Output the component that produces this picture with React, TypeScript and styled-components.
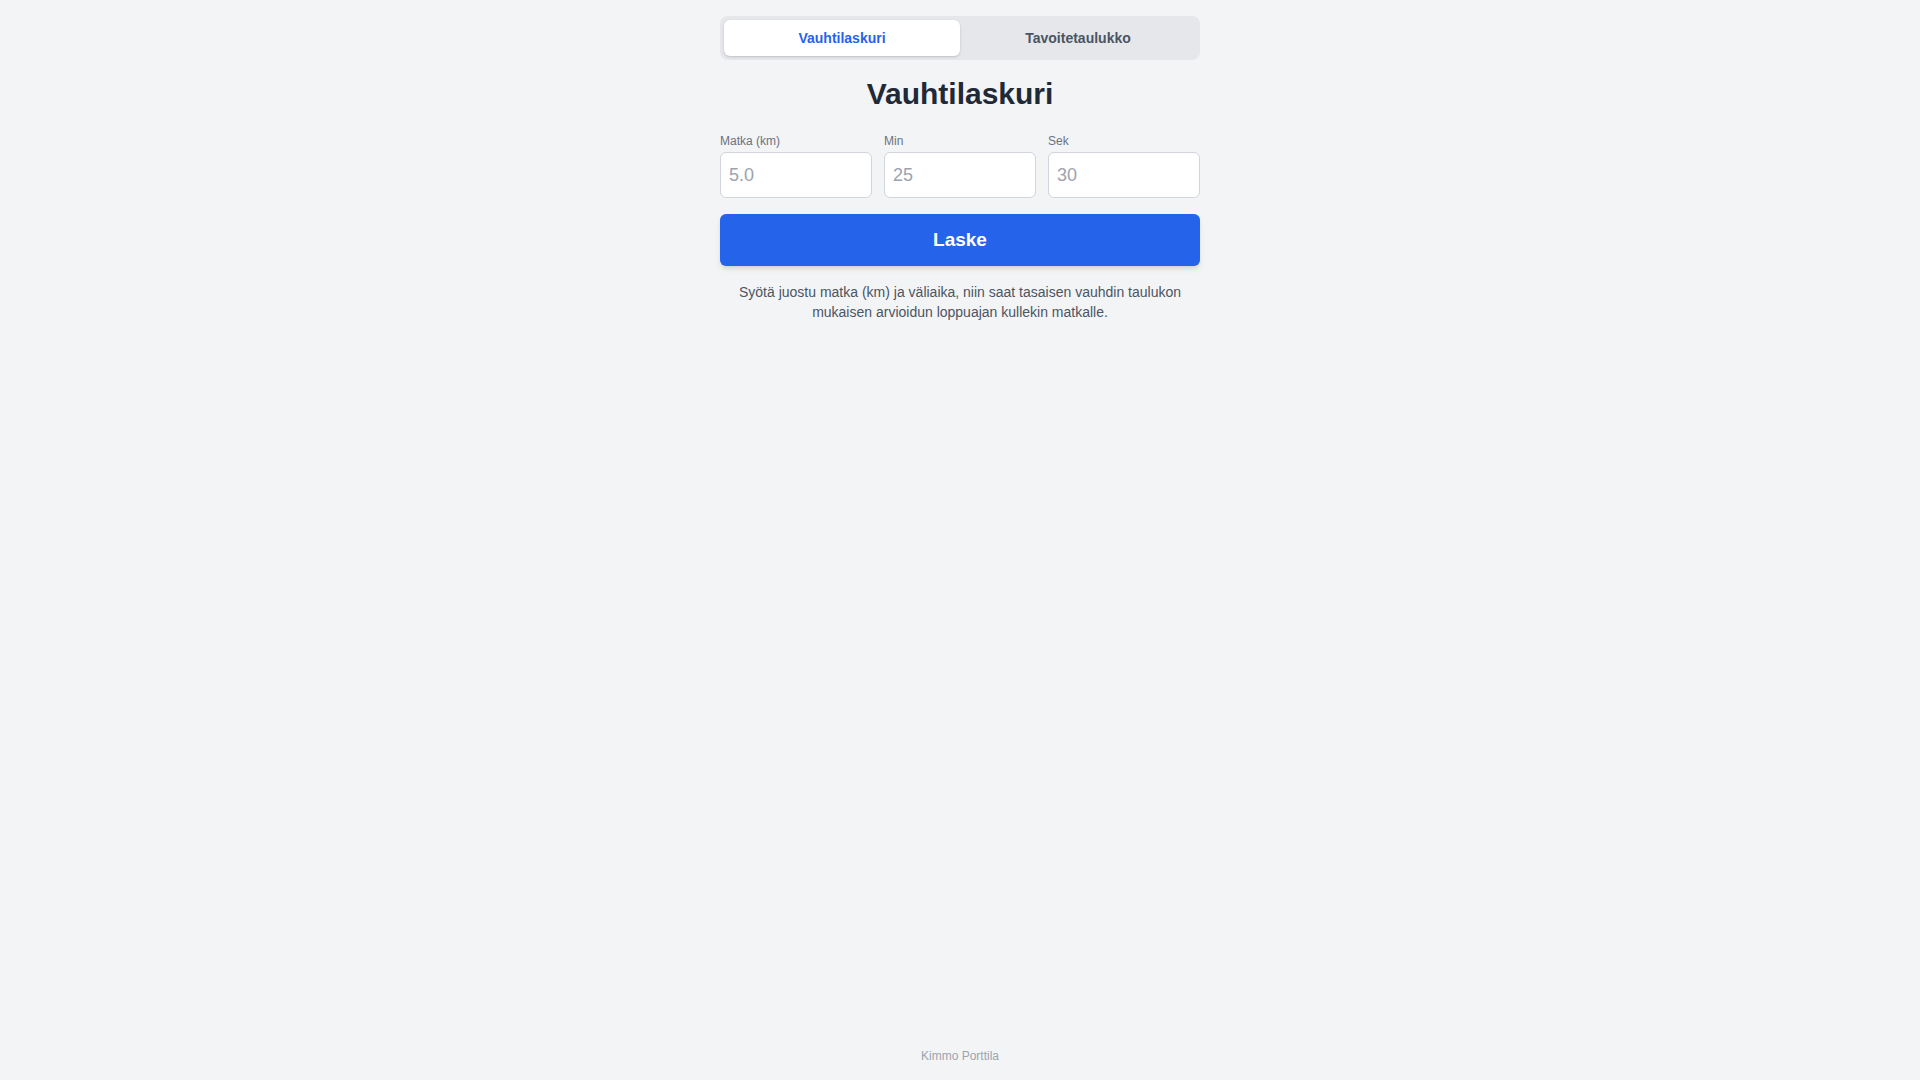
import React, { useState } from 'react';
import styled, { createGlobalStyle } from 'styled-components';

const GlobalStyle = createGlobalStyle`
  html, body {
    margin: 0;
    padding: 0;
    background: #f3f4f6;
    font-family: "Liberation Sans", Arial, Helvetica, sans-serif;
  }
  * { box-sizing: border-box; }
`;

const Page = styled.div`
  min-height: 100vh;
  display: flex;
  flex-direction: column;
  align-items: center;
`;

const Main = styled.main`
  width: 480px;
  padding-top: 16px;
  flex: 1;
`;

const Tabs = styled.div`
  display: grid;
  grid-template-columns: 1fr 1fr;
  padding: 4px;
  background: #e5e7eb;
  border-radius: 8px;
`;

const Tab = styled.button<{ $active?: boolean }>`
  height: 36px;
  border: none;
  border-radius: 6px;
  font-family: inherit;
  font-size: 14px;
  font-weight: 700;
  cursor: pointer;
  background: ${(p) => (p.$active ? '#ffffff' : 'transparent')};
  color: ${(p) => (p.$active ? '#2563eb' : '#4b5563')};
  box-shadow: ${(p) => (p.$active ? '0 1px 3px rgba(0,0,0,0.12), 0 1px 2px rgba(0,0,0,0.06)' : 'none')};
`;

const Title = styled.h1`
  margin: 16px 0 21px;
  text-align: center;
  font-size: 30px;
  line-height: 36px;
  font-weight: 700;
  color: #1f2937;
`;

const Fields = styled.div`
  display: grid;
  grid-template-columns: repeat(3, 1fr);
  gap: 12px;
`;

const Field = styled.label`
  display: flex;
  flex-direction: column;
  gap: 3px;
`;

const FieldLabel = styled.span`
  font-size: 12px;
  line-height: 16px;
  color: #6b7280;
`;

const Input = styled.input`
  height: 46px;
  width: 100%;
  padding: 0 8px;
  border: 1px solid #d1d5db;
  border-radius: 6px;
  background: #fff;
  font-family: inherit;
  font-size: 18px;
  color: #111827;
  outline: none;
  &::placeholder { color: #9ca3af; }
`;

const Button = styled.button`
  margin-top: 16px;
  width: 100%;
  height: 52px;
  border: none;
  border-radius: 6px;
  background: #2563eb;
  color: #fff;
  font-family: inherit;
  font-size: 19px;
  font-weight: 700;
  cursor: pointer;
  box-shadow: 0 4px 6px -1px rgba(0,0,0,0.1), 0 2px 4px -2px rgba(0,0,0,0.1);
`;

const Hint = styled.p`
  margin: 16px 0 0;
  text-align: center;
  font-size: 14px;
  line-height: 20px;
  color: #4b5563;
`;

const Footer = styled.footer`
  padding: 16px 0 16px;
  font-size: 12px;
  line-height: 16px;
  color: #9ca3af;
`;

export default function App() {
  const [tab, setTab] = useState<'pace' | 'target'>('pace');

  return (
    <>
      <GlobalStyle />
      <Page>
        <Main>
          <Tabs>
            <Tab $active={tab === 'pace'} onClick={() => setTab('pace')}>Vauhtilaskuri</Tab>
            <Tab $active={tab === 'target'} onClick={() => setTab('target')}>Tavoitetaulukko</Tab>
          </Tabs>
          <Title>Vauhtilaskuri</Title>
          <Fields>
            <Field>
              <FieldLabel>Matka (km)</FieldLabel>
              <Input placeholder="5.0" />
            </Field>
            <Field>
              <FieldLabel>Min</FieldLabel>
              <Input placeholder="25" />
            </Field>
            <Field>
              <FieldLabel>Sek</FieldLabel>
              <Input placeholder="30" />
            </Field>
          </Fields>
          <Button>Laske</Button>
          <Hint>
            Syötä juostu matka (km) ja väliaika, niin saat tasaisen vauhdin taulukon
            mukaisen arvioidun loppuajan kullekin matkalle.
          </Hint>
        </Main>
        <Footer>Kimmo Porttila</Footer>
      </Page>
    </>
  );
}
